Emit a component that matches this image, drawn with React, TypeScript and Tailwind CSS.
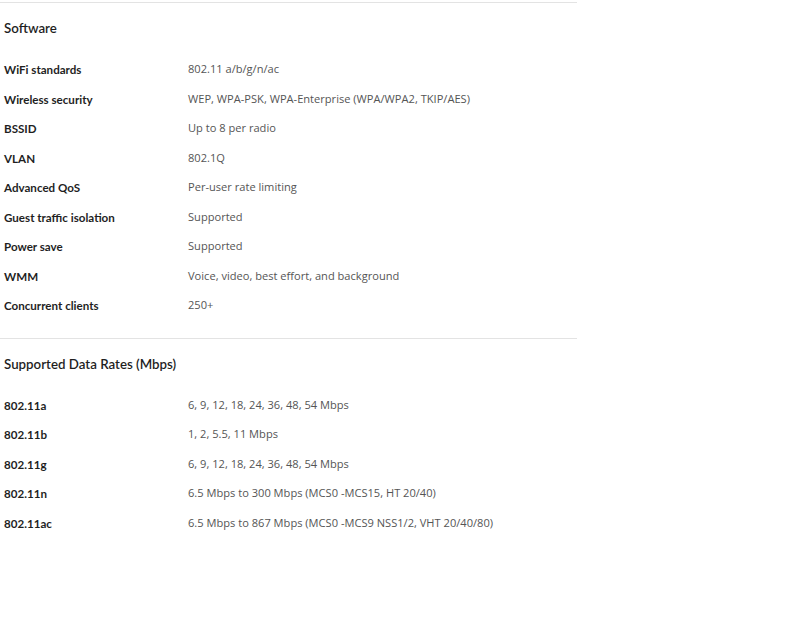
import React from "react";

const software: [string, string][] = [
  ["WiFi standards", "802.11 a/b/g/n/ac"],
  ["Wireless security", "WEP, WPA-PSK, WPA-Enterprise (WPA/WPA2, TKIP/AES)"],
  ["BSSID", "Up to 8 per radio"],
  ["VLAN", "802.1Q"],
  ["Advanced QoS", "Per-user rate limiting"],
  ["Guest traffic isolation", "Supported"],
  ["Power save", "Supported"],
  ["WMM", "Voice, video, best effort, and background"],
  ["Concurrent clients", "250+"],
];

const rates: [string, string][] = [
  ["802.11a", "6, 9, 12, 18, 24, 36, 48, 54 Mbps"],
  ["802.11b", "1, 2, 5.5, 11 Mbps"],
  ["802.11g", "6, 9, 12, 18, 24, 36, 48, 54 Mbps"],
  ["802.11n", "6.5 Mbps to 300 Mbps (MCS0 -MCS15, HT 20/40)"],
  ["802.11ac", "6.5 Mbps to 867 Mbps (MCS0 -MCS9 NSS1/2, VHT 20/40/80)"],
];

function Section({ title, rows }: { title: string; rows: [string, string][] }) {
  return (
    <div className="border-t border-[#e3e3e3] pb-[17px]">
      <div className="h-[52px] flex items-center pl-[4px] text-[13.3px] text-[#1f1f1f] font-semibold font-['Lato',sans-serif]">
        {title}
      </div>
      {rows.map(([k, v]) => (
        <div key={k} className="h-[29.5px] flex items-center">
          <div className="w-[188px] pl-[4px] text-[11.6px] font-bold text-[#1f1f1f] font-['Lato',sans-serif]">{k}</div>
          <div className="text-[11.1px] text-[#555] font-['Open_Sans',sans-serif]">{v}</div>
        </div>
      ))}
    </div>
  );
}

export default function App() {
  return (
    <div className="w-[800px] h-[622px] bg-white pt-[2px]">
      <div className="w-[577px]">
        <Section title="Software" rows={software} />
        <Section title="Supported Data Rates (Mbps)" rows={rates} />
      </div>
    </div>
  );
}
